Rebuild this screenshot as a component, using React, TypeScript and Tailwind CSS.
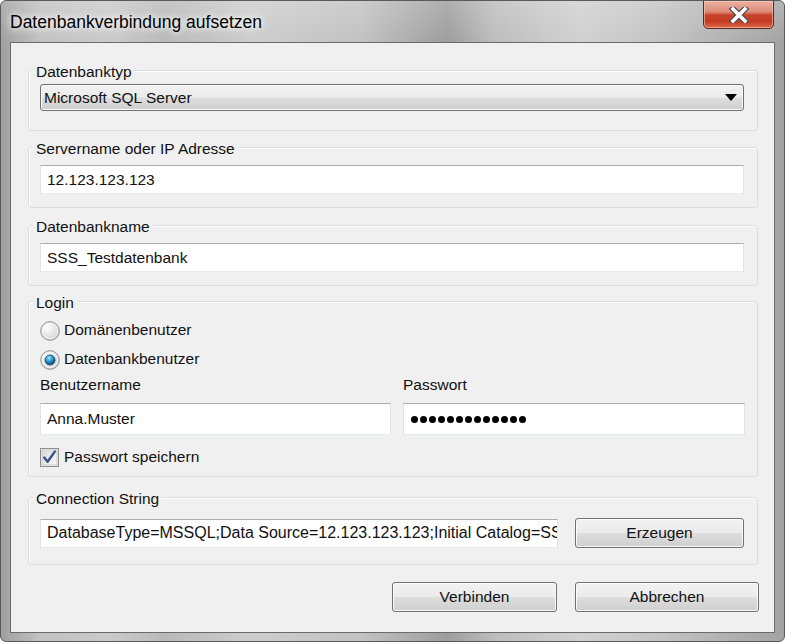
import React from "react";

const btnBg =
  "bg-[linear-gradient(180deg,#f2f2f2_0%,#ebebeb_48%,#dddddd_52%,#cfcfcf_100%)]";

function Group({
  label,
  className = "",
  children,
}: {
  label: string;
  className?: string;
  children?: React.ReactNode;
}) {
  return (
    <div
      className={`ml-[17px] w-[730px] rounded-[3px] border border-[#d5dfe5] shadow-[inset_1px_1px_0_#ffffff] pl-[11px] ${className}`}
    >
      <div className="-mt-[9px] -ml-[7px] w-fit bg-[#f0f0f0] px-[3px] leading-[20px]">
        {label}
      </div>
      {children}
    </div>
  );
}

function TextBox({
  className = "",
  children,
}: {
  className?: string;
  children?: React.ReactNode;
}) {
  return (
    <div
      className={`flex items-center overflow-hidden whitespace-nowrap border border-t-[#abadb3] border-l-[#e2e3ea] border-r-[#e2e3ea] border-b-[#e3e9ef] bg-white pl-[6px] ${className}`}
    >
      {children}
    </div>
  );
}

function Btn({ label, className = "" }: { label: string; className?: string }) {
  return (
    <div
      className={`flex h-[30px] items-center justify-center rounded-[3px] border border-[#707070] ${btnBg} shadow-[inset_0_0_0_1px_#fbfbfb] ${className}`}
    >
      {label}
    </div>
  );
}

function Radio({ checked }: { checked?: boolean }) {
  return (
    <svg width="20" height="20" viewBox="0 0 20 20" className="shrink-0">
      <defs>
        <radialGradient id={checked ? "rgA" : "rgB"} cx="0.35" cy="0.3" r="0.8">
          <stop offset="0" stopColor="#ffffff" />
          <stop offset="1" stopColor="#cfcfcf" />
        </radialGradient>
        <radialGradient id="dot" cx="0.4" cy="0.3" r="0.75">
          <stop offset="0" stopColor="#a6ecff" />
          <stop offset="0.45" stopColor="#2a9ad8" />
          <stop offset="1" stopColor="#05365f" />
        </radialGradient>
      </defs>
      <circle cx="10" cy="10" r="9.3" fill={`url(#${checked ? "rgA" : "rgB"})`} stroke="#8c8e8f" strokeWidth="1" />
      <circle cx="10" cy="10" r="7.6" fill="none" stroke="#f4f4f4" strokeWidth="1" />
      {checked && (
        <circle cx="10" cy="10" r="5" fill="url(#dot)" stroke="#1c3f5e" strokeWidth="0.8" />
      )}
    </svg>
  );
}

function Check() {
  return (
    <svg width="19" height="19" viewBox="0 0 19 19" className="shrink-0">
      <defs>
        <linearGradient id="cbg" x1="0" y1="0" x2="1" y2="1">
          <stop offset="0" stopColor="#d9d9d9" />
          <stop offset="1" stopColor="#fafafa" />
        </linearGradient>
      </defs>
      <rect x="0.5" y="0.5" width="18" height="18" fill="#f4f4f4" stroke="#8e8f8f" />
      <rect x="2" y="2" width="15" height="15" fill="url(#cbg)" stroke="#c9c9c9" strokeWidth="1" />
      <path
        d="M4.2 9.6 L7.6 13.8 L14.8 3.6"
        fill="none"
        stroke="#3a4f8e"
        strokeWidth="2.4"
        strokeLinecap="round"
        strokeLinejoin="round"
      />
    </svg>
  );
}

export default function App() {
  return (
    <div className="relative h-[642px] w-[785px] overflow-hidden rounded-[6px] border border-[#5a5a5a] bg-[linear-gradient(180deg,rgba(255,255,255,0.18)_0px,rgba(255,255,255,0)_42px),linear-gradient(90deg,#9f9f9f_0%,#c2c2c2_5%,#cacaca_14%,#b9b9b9_21%,#cdcdcd_32%,#c2c2c2_46%,#9d9d9d_57%,#bdbdbd_63%,#d0d0d0_74%,#c4c4c4_84%,#b3b3b3_92%,#a3a3a3_100%)] font-['Liberation_Sans',Arial,sans-serif] text-[15.5px] text-[#111]">
      {/* title bar */}
      <div className="flex h-[41px] items-start">
        <div className="ml-[9px] mt-[9px] text-[17.5px] leading-[24px] text-black [text-shadow:0_0_6px_#ffffff,0_0_10px_#ffffff]">
          Datenbankverbindung aufsetzen
        </div>
        <div className="ml-auto mr-[10px] -mt-px flex h-[29px] w-[71px] items-center justify-center rounded-b-[5px] border border-[#5b2a22] bg-[linear-gradient(180deg,#eab0a2_0%,#dd8c78_40%,#c8432c_52%,#c43a22_75%,#dc6a45_100%)] shadow-[inset_0_0_0_1px_rgba(255,210,200,0.55)]">
          <svg width="20" height="16" viewBox="0 0 20 16">
            <path d="M4 2 L16 14 M16 2 L4 14" stroke="#4b4b4b" strokeWidth="6" strokeLinecap="square" />
            <path d="M4 2 L16 14 M16 2 L4 14" stroke="#ffffff" strokeWidth="3.6" strokeLinecap="square" />
          </svg>
        </div>
      </div>

      {/* client area */}
      <div className="ml-[9px] flex h-[591px] w-[765px] flex-col border border-[#6b6b6b] bg-[#f0f0f0]">
        <Group label="Datenbanktyp" className="mt-[27px] pb-[19px] pr-[13px]">
          <div
            className={`mt-[2px] flex h-[27px] items-center justify-between rounded-[3px] border border-[#707070] ${btnBg} shadow-[inset_0_0_0_1px_#fbfbfb] pl-[3px] pr-[6px]`}
          >
            <span>Microsoft SQL Server</span>
            <svg width="12" height="7" viewBox="0 0 12 7">
              <polygon points="0,0 12,0 6,7" fill="#000" />
            </svg>
          </div>
        </Group>

        <Group label="Servername oder IP Adresse" className="mt-[16px] pb-[13px] pr-[13px]">
          <TextBox className="mt-[6px] h-[29px]">12.123.123.123</TextBox>
        </Group>

        <Group label="Datenbankname" className="mt-[17px] pb-[13px] pr-[13px]">
          <TextBox className="mt-[6px] h-[29px]">SSS_Testdatenbank</TextBox>
        </Group>

        <Group label="Login" className="mt-[15px] pb-[9px] pr-[12px]">
          <div className="mt-[8px] flex h-[20px] items-center gap-[4px] leading-[20px]">
            <Radio />
            <span className="-mt-[2px]">Domänenbenutzer</span>
          </div>
          <div className="mt-[9px] flex h-[20px] items-center gap-[4px] leading-[20px]">
            <Radio checked />
            <span className="-mt-[2px]">Datenbankbenutzer</span>
          </div>
          <div className="mt-[5px] flex gap-[12px]">
            <div className="flex w-[351px] flex-col">
              <div className="leading-[20px]">Benutzername</div>
              <TextBox className="mt-[8px] h-[32px]">Anna.Muster</TextBox>
            </div>
            <div className="flex w-[342px] flex-col">
              <div className="leading-[20px]">Passwort</div>
              <TextBox className="mt-[8px] h-[32px] gap-[2px] pl-[7px]">
                {Array.from({ length: 13 }).map((_, i) => (
                  <div key={i} className="h-[7px] w-[7px] rounded-full bg-black" />
                ))}
              </TextBox>
            </div>
          </div>
          <div className="mt-[12px] flex h-[20px] items-center gap-[5px] leading-[20px]">
            <Check />
            <span>Passwort speichern</span>
          </div>
        </Group>

        <Group label="Connection String" className="mt-[20px] pb-[16px] pr-[13px]">
          <div className="mt-[9px] flex h-[30px] items-center">
            <TextBox className="h-[29px] w-[518px] text-[16px]">
              DatabaseType=MSSQL;Data Source=12.123.123.123;Initial Catalog=SS
            </TextBox>
            <Btn label="Erzeugen" className="ml-[17px] w-[169px]" />
          </div>
        </Group>

        <div className="mr-[15px] mt-[17px] flex justify-end gap-[18px]">
          <Btn label="Verbinden" className="w-[165px]" />
          <Btn label="Abbrechen" className="w-[184px]" />
        </div>
      </div>
    </div>
  );
}
